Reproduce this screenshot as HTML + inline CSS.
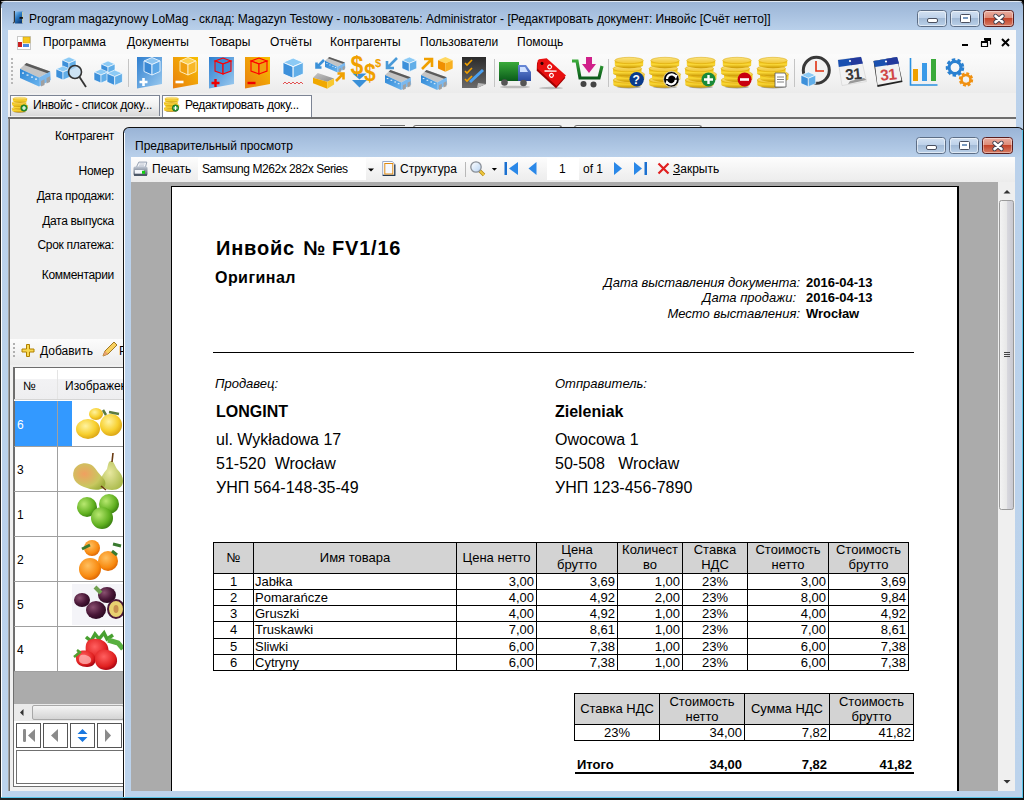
<!DOCTYPE html>
<html><head><meta charset="utf-8">
<style>
*{margin:0;padding:0;box-sizing:border-box}
html,body{width:1024px;height:800px;overflow:hidden;background:#000}
body{position:relative;font-family:"Liberation Sans",sans-serif;font-size:12px;color:#000}
.a{position:absolute}
.t{position:absolute;white-space:nowrap;line-height:1}
.b{font-weight:bold}
.i{font-style:italic}
.hc{position:absolute;top:542px;height:30px;display:flex;align-items:center;justify-content:center;text-align:center;font-size:13px;line-height:15px}
.hc2{position:absolute;top:693px;height:31px;display:flex;align-items:center;justify-content:center;text-align:center;font-size:13px;line-height:15px}
.tc{position:absolute;font-size:13px;line-height:16px;padding:0 2px;white-space:nowrap}
</style></head><body>
<!-- main window -->
<div class="a" style="left:0;top:0;width:1024px;height:800px;background:linear-gradient(#9ab4d6 0,#bad1eb 30px,#bcd3ec 100%);border:1px solid #222;border-radius:6px 6px 0 0;border-bottom-width:2px;"></div>
<div class="a" style="left:1px;top:1px;width:1021px;height:1px;background:rgba(255,255,255,.7);border-radius:5px 5px 0 0"></div>

<div class="a" style="left:1px;top:8px;width:1px;height:789px;background:#fff"></div>
<!-- title -->
<div class="t" style="left:29px;top:13px;font-size:12px;color:#000">Program magazynowy LoMag - склад: Magazyn Testowy - пользователь: Administrator - [Редактировать документ: Инвойс [Счёт нетто]]</div>

<!-- client area -->
<div class="a" style="left:8px;top:30px;width:1008px;height:761px;background:#f0f0f0"></div>
<!-- menu -->
<div class="a" style="left:8px;top:30px;width:1008px;height:24px;background:#f9f9f9"></div>
<div class="t" style="left:43px;top:36px">Программа</div>
<div class="t" style="left:127px;top:36px">Документы</div>
<div class="t" style="left:209px;top:36px">Товары</div>
<div class="t" style="left:270px;top:36px">Отчёты</div>
<div class="t" style="left:330px;top:36px">Контрагенты</div>
<div class="t" style="left:420px;top:36px">Пользователи</div>
<div class="t" style="left:517px;top:36px">Помощь</div>
<!-- toolbar -->
<div class="a" style="left:8px;top:54px;width:1008px;height:39px;background:linear-gradient(#fbfbfb,#f3f3f3 60%,#ebebeb)"></div>

<!-- tabs row -->
<div class="a" style="left:8px;top:93px;width:1008px;height:25px;background:#f0f0f0"></div>
<div class="a" style="left:10px;top:95px;width:150px;height:21px;border:1px solid #7c8494;border-bottom:none;background:linear-gradient(#fdfdfd,#f0f0f0 50%,#d9d9d9)"></div>
<div class="a" style="left:162px;top:95px;width:150px;height:22px;border:1px solid #7c8494;border-bottom:none;background:#fff"></div>
<div class="t" style="left:33px;top:99px;letter-spacing:-.3px">Инвойс - список доку...</div>
<div class="t" style="left:185px;top:99px;letter-spacing:-.3px">Редактировать доку...</div>
<div class="a" style="left:8px;top:117px;width:1008px;height:2px;background:#6d6d6d"></div>

<svg class="a" style="left:0;top:0" width="1024" height="120" viewBox="0 0 1024 120">
<defs>
<linearGradient id="gB" x1="0" y1="0" x2="1" y2="1"><stop offset="0" stop-color="#2f7fcf"/><stop offset="1" stop-color="#9ccbf0"/></linearGradient>
<linearGradient id="gBd" x1="0" y1="0" x2="0" y2="1"><stop offset="0" stop-color="#5aaae8"/><stop offset="1" stop-color="#2a78c8"/></linearGradient>
<linearGradient id="gO" x1="1" y1="0" x2="0" y2="1"><stop offset="0" stop-color="#f8c000"/><stop offset="1" stop-color="#e87e10"/></linearGradient>
<linearGradient id="gOc" x1="0" y1="0" x2="0" y2="1"><stop offset="0" stop-color="#ffc830"/><stop offset="1" stop-color="#f09000"/></linearGradient>
<linearGradient id="gRoof" x1="0" y1="0" x2="1" y2="1"><stop offset="0" stop-color="#c8c8c8"/><stop offset="1" stop-color="#8a8a8a"/></linearGradient>
<linearGradient id="gSide" x1="0" y1="0" x2="0" y2="1"><stop offset="0" stop-color="#e8b400"/><stop offset=".5" stop-color="#fad838"/><stop offset="1" stop-color="#c89400"/></linearGradient><linearGradient id="gTop" x1="0" y1="0" x2="0" y2="1"><stop offset="0" stop-color="#fbe480"/><stop offset="1" stop-color="#f0c430"/></linearGradient><linearGradient id="gCoin" x1="0" y1="0" x2="0" y2="1"><stop offset="0" stop-color="#fff2a0"/><stop offset=".5" stop-color="#f5d040"/><stop offset="1" stop-color="#d9a800"/></linearGradient>
<linearGradient id="gGreen" x1="0" y1="0" x2="0" y2="1"><stop offset="0" stop-color="#3aaa3a"/><stop offset="1" stop-color="#0a5a1a"/></linearGradient>
<linearGradient id="gCab" x1="0" y1="0" x2="0" y2="1"><stop offset="0" stop-color="#6a8ad8"/><stop offset="1" stop-color="#2a4aa0"/></linearGradient>
<linearGradient id="gDark" x1="0" y1="0" x2="0" y2="1"><stop offset="0" stop-color="#2a2a2a"/><stop offset="1" stop-color="#6a6a6a"/></linearGradient>
<linearGradient id="gWall" x1="0" y1="0" x2="1" y2="1"><stop offset="0" stop-color="#2a84d4"/><stop offset="1" stop-color="#6ab4ee"/></linearGradient>
<g id="wh">
 <polygon points="0,23 19,31 31,24 30.5,15 19,23.5 0,15" fill="#fff" opacity="0"/>
 <polygon points="0,5.8 6.4,0 30.2,8.4 19,14.6" fill="#c4c4c4"/>
 <polygon points="6.4,0 30.2,8.4 28,10.6 4.3,2" fill="#5a5a5a"/>
 <polygon points="0,5.8 19,14.6 19,23.5 0,15" fill="url(#gWall)"/>
 <polygon points="19,14.6 30.2,8.4 30.8,17 19,23.5" fill="#7ab8ee"/>
 <polygon points="21,18 24.5,16.3 24.5,22 21,23.6" fill="#a0a0a0"/><polygon points="26.5,15 30,13.2 30,19 26.5,20.6" fill="#a0a0a0"/>
 <g fill="#fff" opacity=".9"><rect x="2" y="9.5" width="2" height="1.2"/><rect x="6.5" y="11.5" width="2" height="1.2"/><rect x="11" y="13.5" width="2" height="1.2"/><rect x="15" y="15.5" width="2" height="1.2"/></g>
</g>
<g id="cube">
 <polygon points="0,3 7,0 14,3 7,6" fill="#8ccaf5" stroke="#fff" stroke-width=".6"/>
 <polygon points="0,3 7,6 7,14 0,11" fill="#3d90da" stroke="#fff" stroke-width=".6"/>
 <polygon points="7,6 14,3 14,11 7,14" fill="#62aee8" stroke="#fff" stroke-width=".6"/>
</g>
<g id="coins"><ellipse cx="16" cy="30" rx="12" ry="1.4" fill="#444" opacity=".45"/><path d="M0.3000000000000007 23.0v4.6a14.2 3.2 0 0 0 28.4 0v-4.6z" fill="url(#gSide)"/><ellipse cx="14.5" cy="23.0" rx="14.2" ry="3.2" fill="url(#gTop)" stroke="#d9a400" stroke-width=".5"/><path d="M3.1000000000000014 17.2v4.6a14.2 3.2 0 0 0 28.4 0v-4.6z" fill="url(#gSide)"/><ellipse cx="17.3" cy="17.2" rx="14.2" ry="3.2" fill="url(#gTop)" stroke="#d9a400" stroke-width=".5"/><path d="M0.10000000000000142 11.600000000000001v4.6a14.2 3.2 0 0 0 28.4 0v-4.6z" fill="url(#gSide)"/><ellipse cx="14.3" cy="11.600000000000001" rx="14.2" ry="3.2" fill="url(#gTop)" stroke="#d9a400" stroke-width=".5"/><path d="M1.8000000000000007 3.5v4.6a14.2 3.2 0 0 0 28.4 0v-4.6z" fill="url(#gSide)"/><ellipse cx="16" cy="3.5" rx="14.2" ry="3.2" fill="url(#gTop)" stroke="#d9a400" stroke-width=".5"/></g>
</defs>
<!-- menu icon -->
<rect x="17.5" y="36.5" width="13" height="13" fill="#fff" stroke="#c8c8c8"/>
<rect x="23" y="37" width="7" height="6" fill="#f7c820" stroke="#c89a00" stroke-width=".5"/>
<rect x="18" y="42" width="4" height="5" fill="#c82020"/>
<rect x="23" y="44" width="6" height="3" fill="#4a8ae0"/>
<!-- grip -->
<g fill="#b8b8b8"><rect x="11" y="58" width="2" height="2"/><rect x="11" y="62" width="2" height="2"/><rect x="11" y="66" width="2" height="2"/><rect x="11" y="70" width="2" height="2"/><rect x="11" y="74" width="2" height="2"/><rect x="11" y="78" width="2" height="2"/><rect x="11" y="82" width="2" height="2"/></g>
<!-- 1 warehouse -->
<g transform="translate(20 63)">
 <polygon points="0,23 19,31 31,24 30.5,15 19,23.5 0,15" fill="#fff" opacity="0"/>
 <polygon points="0,5.8 6.4,0 30.2,8.4 19,14.6" fill="#c4c4c4"/>
 <polygon points="6.4,0 30.2,8.4 28,10.6 4.3,2" fill="#5a5a5a"/>
 <polygon points="0,5.8 19,14.6 19,23.5 0,15" fill="url(#gWall)"/>
 <polygon points="19,14.6 30.2,8.4 30.8,17 19,23.5" fill="#7ab8ee"/>
 <polygon points="21,18 24.5,16.3 24.5,22 21,23.6" fill="#a0a0a0"/><polygon points="26.5,15 30,13.2 30,19 26.5,20.6" fill="#a0a0a0"/>
 <g fill="#fff" opacity=".9"><rect x="2" y="9.5" width="2" height="1.2"/><rect x="6.5" y="11.5" width="2" height="1.2"/><rect x="11" y="13.5" width="2" height="1.2"/><rect x="15" y="15.5" width="2" height="1.2"/></g>
</g>
<!-- 2 search cubes -->
<g transform="translate(62 57)">
 <polygon points="0,3 7,0 14,3 7,6" fill="#8ccaf5" stroke="#fff" stroke-width=".6"/>
 <polygon points="0,3 7,6 7,14 0,11" fill="#3d90da" stroke="#fff" stroke-width=".6"/>
 <polygon points="7,6 14,3 14,11 7,14" fill="#62aee8" stroke="#fff" stroke-width=".6"/>
</g><g transform="translate(0,0) translate(56 66)">
 <polygon points="0,3 7,0 14,3 7,6" fill="#8ccaf5" stroke="#fff" stroke-width=".6"/>
 <polygon points="0,3 7,6 7,14 0,11" fill="#3d90da" stroke="#fff" stroke-width=".6"/>
 <polygon points="7,6 14,3 14,11 7,14" fill="#62aee8" stroke="#fff" stroke-width=".6"/>
</g>
<circle cx="75" cy="72" r="6.5" fill="#bcdcf3" fill-opacity=".7" stroke="#333" stroke-width="1.6"/>
<line x1="79.5" y1="77" x2="86" y2="87" stroke="#333" stroke-width="1.8"/>
<!-- 3 cubes -->
<g transform="translate(101 61)">
 <polygon points="0,3 7,0 14,3 7,6" fill="#8ccaf5" stroke="#fff" stroke-width=".6"/>
 <polygon points="0,3 7,6 7,14 0,11" fill="#3d90da" stroke="#fff" stroke-width=".6"/>
 <polygon points="7,6 14,3 14,11 7,14" fill="#62aee8" stroke="#fff" stroke-width=".6"/>
</g><g transform="translate(94 69)">
 <polygon points="0,3 7,0 14,3 7,6" fill="#8ccaf5" stroke="#fff" stroke-width=".6"/>
 <polygon points="0,3 7,6 7,14 0,11" fill="#3d90da" stroke="#fff" stroke-width=".6"/>
 <polygon points="7,6 14,3 14,11 7,14" fill="#62aee8" stroke="#fff" stroke-width=".6"/>
</g><g transform="translate(107,70) scale(1.1) translate(-107,-70) translate(107 70)">
 <polygon points="0,3 7,0 14,3 7,6" fill="#8ccaf5" stroke="#fff" stroke-width=".6"/>
 <polygon points="0,3 7,6 7,14 0,11" fill="#3d90da" stroke="#fff" stroke-width=".6"/>
 <polygon points="7,6 14,3 14,11 7,14" fill="#62aee8" stroke="#fff" stroke-width=".6"/>
</g>
<!-- separators -->
<rect x="128" y="59" width="1" height="28" fill="#c4c4c4"/><rect x="494" y="59" width="1" height="28" fill="#c4c4c4"/><rect x="608" y="59" width="1" height="28" fill="#c4c4c4"/><rect x="794" y="59" width="1" height="28" fill="#c4c4c4"/>
<!-- 4 blue doc + -->
<polygon points="137,57 162,57 162,84 137,88.5" fill="url(#gB)"/>
<g stroke="#e8f4ff" stroke-width=".9"><polygon points="144,61 152,57.5 160,61 152,64.5" fill="#8cc4f0"/><polygon points="144,61 152,64.5 152,75 144,71.5" fill="#3a88d4"/><polygon points="152,64.5 160,61 160,71.5 152,75" fill="#5aa6e6"/></g>
<path d="M139.5 82h8M143.5 78v8" stroke="#fff" stroke-width="2.6"/>
<!-- 5 orange doc - -->
<polygon points="173,57 198,57 198,84 173,88.5" fill="url(#gO)"/>
<g stroke="#fff0c8" stroke-width=".9"><polygon points="180,61 188,57.5 196,61 188,64.5" fill="#fcd050"/><polygon points="180,61 188,64.5 188,75 180,71.5" fill="#f0a010"/><polygon points="188,64.5 196,61 196,71.5 188,75" fill="#f8b828"/></g>
<path d="M175.5 82h8" stroke="#fff" stroke-width="2.6"/>
<!-- 6 blue doc red cube + -->
<polygon points="209,57 234,57 234,84 209,88.5" fill="url(#gB)"/>
<g stroke="#f00" stroke-width="1.1" fill="#3a88d4" fill-opacity=".85"><polygon points="215,61 223,58 231,61 223,64"/><polygon points="215,61 223,64 223,74 215,71"/><polygon points="223,64 231,61 231,71 223,74"/></g>
<path d="M211.5 83h8M215.5 79v8" stroke="#e00" stroke-width="2.4"/>
<!-- 7 orange doc red cube - -->
<polygon points="245,57 270,57 270,84 245,88.5" fill="url(#gO)"/>
<g stroke="#f00" stroke-width="1.1" fill="#f0a010"><polygon points="251,61 259,58 267,61 259,64"/><polygon points="251,61 259,64 259,74 251,71"/><polygon points="259,64 267,61 267,71 259,74"/></g>
<path d="M247.5 83h8" stroke="#e00" stroke-width="2.4"/>
<!-- 8 cube zigzag -->
<g transform="translate(283,58) scale(1.45)"><g transform="translate(0 0)">
 <polygon points="0,3 7,0 14,3 7,6" fill="#8ccaf5" stroke="#fff" stroke-width=".6"/>
 <polygon points="0,3 7,6 7,14 0,11" fill="#3d90da" stroke="#fff" stroke-width=".6"/>
 <polygon points="7,6 14,3 14,11 7,14" fill="#62aee8" stroke="#fff" stroke-width=".6"/>
</g></g>
<polyline points="283,84 285,82 287,84 289,82 291,84 293,82 295,84 297,82 299,84 301,82 303,84" fill="none" stroke="#e04040" stroke-width=".9"/>
<!-- 9 warehouses swap -->
<g transform="translate(325,57) scale(.66)"><g transform="translate(0 0)">
 <polygon points="0,23 19,31 31,24 30.5,15 19,23.5 0,15" fill="#fff" opacity="0"/>
 <polygon points="0,5.8 6.4,0 30.2,8.4 19,14.6" fill="#c4c4c4"/>
 <polygon points="6.4,0 30.2,8.4 28,10.6 4.3,2" fill="#5a5a5a"/>
 <polygon points="0,5.8 19,14.6 19,23.5 0,15" fill="url(#gWall)"/>
 <polygon points="19,14.6 30.2,8.4 30.8,17 19,23.5" fill="#7ab8ee"/>
 <polygon points="21,18 24.5,16.3 24.5,22 21,23.6" fill="#a0a0a0"/><polygon points="26.5,15 30,13.2 30,19 26.5,20.6" fill="#a0a0a0"/>
 <g fill="#fff" opacity=".9"><rect x="2" y="9.5" width="2" height="1.2"/><rect x="6.5" y="11.5" width="2" height="1.2"/><rect x="11" y="13.5" width="2" height="1.2"/><rect x="15" y="15.5" width="2" height="1.2"/></g>
</g></g>
<g transform="translate(313,73) scale(.68)">
 <polygon points="0,7 7,0 31,8 21,13" fill="url(#gRoof)"/><polygon points="0,7 21,13 21,23 0,15" fill="#f0a800"/><polygon points="21,13 31,8 31,17 21,23" fill="#f8c830"/>
</g>
<path d="M324 60l-7 7M316.5 62.5v5h5" stroke="#3a90d8" stroke-width="2.6" fill="none"/>
<path d="M336 81l7-7M337.5 73.5h6v6" stroke="#f0a000" stroke-width="2.6" fill="none"/>
<!-- 10 $$ -->
<path d="M352.5 73.5h14l-7 6z" fill="#3a90d8"/>
<path d="M352 80h15l-7.5 7.5z" fill="#3a90d8"/>
<text x="350.5" y="74" font-family="Liberation Sans" font-weight="bold" font-size="23" fill="#f0a000" transform="translate(350.5 74) scale(1 1.1) translate(-350.5 -74)">$</text>
<text x="364" y="81.5" font-family="Liberation Sans" font-weight="bold" font-size="21" fill="#f0a000" transform="translate(364 81.5) scale(1 1.1) translate(-364 -81.5)">$</text>
<text x="375" y="67" font-family="Liberation Sans" font-weight="bold" font-size="11" fill="#f0a000">$</text>
<!-- 11 blue arrow cube warehouse -->
<path d="M397 58l-9 9M387 61v7h7" stroke="#4a9ad8" stroke-width="2.6" fill="none"/>
<g transform="translate(402,57) scale(1.05)"><g transform="translate(0 0)">
 <polygon points="0,3 7,0 14,3 7,6" fill="#8ccaf5" stroke="#fff" stroke-width=".6"/>
 <polygon points="0,3 7,6 7,14 0,11" fill="#3d90da" stroke="#fff" stroke-width=".6"/>
 <polygon points="7,6 14,3 14,11 7,14" fill="#62aee8" stroke="#fff" stroke-width=".6"/>
</g></g>
<g transform="translate(385,70) scale(.85)"><g transform="translate(0 0)">
 <polygon points="0,23 19,31 31,24 30.5,15 19,23.5 0,15" fill="#fff" opacity="0"/>
 <polygon points="0,5.8 6.4,0 30.2,8.4 19,14.6" fill="#c4c4c4"/>
 <polygon points="6.4,0 30.2,8.4 28,10.6 4.3,2" fill="#5a5a5a"/>
 <polygon points="0,5.8 19,14.6 19,23.5 0,15" fill="url(#gWall)"/>
 <polygon points="19,14.6 30.2,8.4 30.8,17 19,23.5" fill="#7ab8ee"/>
 <polygon points="21,18 24.5,16.3 24.5,22 21,23.6" fill="#a0a0a0"/><polygon points="26.5,15 30,13.2 30,19 26.5,20.6" fill="#a0a0a0"/>
 <g fill="#fff" opacity=".9"><rect x="2" y="9.5" width="2" height="1.2"/><rect x="6.5" y="11.5" width="2" height="1.2"/><rect x="11" y="13.5" width="2" height="1.2"/><rect x="15" y="15.5" width="2" height="1.2"/></g>
</g></g>
<!-- 12 orange arrow cube warehouse -->
<path d="M422 69l9-9M424 59h8v8" stroke="#f0a000" stroke-width="2.6" fill="none"/>
<g transform="translate(438,57) scale(1.05)">
 <polygon points="0,3 7,0 14,3 7,6" fill="#ffd860"/><polygon points="0,3 7,6 7,14 0,11" fill="#f09000"/><polygon points="7,6 14,3 14,11 7,14" fill="#f8b020"/>
</g>
<g transform="translate(421,70) scale(.85)"><g transform="translate(0 0)">
 <polygon points="0,23 19,31 31,24 30.5,15 19,23.5 0,15" fill="#fff" opacity="0"/>
 <polygon points="0,5.8 6.4,0 30.2,8.4 19,14.6" fill="#c4c4c4"/>
 <polygon points="6.4,0 30.2,8.4 28,10.6 4.3,2" fill="#5a5a5a"/>
 <polygon points="0,5.8 19,14.6 19,23.5 0,15" fill="url(#gWall)"/>
 <polygon points="19,14.6 30.2,8.4 30.8,17 19,23.5" fill="#7ab8ee"/>
 <polygon points="21,18 24.5,16.3 24.5,22 21,23.6" fill="#a0a0a0"/><polygon points="26.5,15 30,13.2 30,19 26.5,20.6" fill="#a0a0a0"/>
 <g fill="#fff" opacity=".9"><rect x="2" y="9.5" width="2" height="1.2"/><rect x="6.5" y="11.5" width="2" height="1.2"/><rect x="11" y="13.5" width="2" height="1.2"/><rect x="15" y="15.5" width="2" height="1.2"/></g>
</g></g>
<!-- 13 checklist -->
<polygon points="462,57 486,57 486,84 477,88 462,88" fill="url(#gDark)"/>
<polygon points="477,88 486,84 478,83" fill="#bbb"/>
<path d="M465 63l2 2 5-5M465 71l2 2 5-5M465 79l2 2 5-5" stroke="#f0a000" stroke-width="1.6" fill="none"/>
<path d="M470 82l13-12" stroke="#4aa0f0" stroke-width="3"/>
<!-- 14 truck -->
<ellipse cx="515" cy="87" rx="15" ry="1.3" fill="#999" opacity=".6"/>
<rect x="499" y="62" width="20" height="19" fill="url(#gGreen)"/>
<path d="M518 65h8l5 7v9h-13z" fill="url(#gCab)"/>
<path d="M520 67h5l3 5h-8z" fill="#cfe0ff"/>
<circle cx="504.5" cy="82.5" r="3.3" fill="#555"/><circle cx="523.5" cy="83" r="3.3" fill="#555"/>
<!-- 15 tag -->
<ellipse cx="551" cy="88" rx="12" ry="1.2" fill="#888" opacity=".5"/>
<g transform="translate(549.5,71.5) rotate(42)">
<polygon points="-16,-2 -11,-8 15,-8 15,6 -11,6 -16,0" fill="#a00000" transform="translate(1,2)"/>
<polygon points="-16,-2 -11,-8 15,-8 15,6 -11,6 -16,0" fill="#e81010"/>
<circle cx="-11" cy="-1" r="1.6" fill="#300"/>
<path d="M-4 3L5-5" stroke="#fff" stroke-width="1.4"/><circle cx="-3" cy="-3.5" r="1.9" fill="none" stroke="#fff" stroke-width="1.2"/><circle cx="4" cy="1.5" r="1.9" fill="none" stroke="#fff" stroke-width="1.2"/>
</g>
<!-- 16 cart -->
<path d="M572 61h5l3 17h19l3-12" stroke="url(#gGreen)" stroke-width="3.2" fill="none"/>
<path d="M586 57h6v7h4l-7 9-7-9h4z" fill="#d0208a"/>
<circle cx="583.5" cy="84" r="3" fill="#444"/><circle cx="593.5" cy="84.5" r="3" fill="#444"/>
<!-- 17-21 coins -->
<g transform="translate(613 57)"><ellipse cx="16" cy="30" rx="12" ry="1.4" fill="#444" opacity=".45"/><path d="M0.3000000000000007 23.0v4.6a14.2 3.2 0 0 0 28.4 0v-4.6z" fill="url(#gSide)"/><ellipse cx="14.5" cy="23.0" rx="14.2" ry="3.2" fill="url(#gTop)" stroke="#d9a400" stroke-width=".5"/><path d="M3.1000000000000014 17.2v4.6a14.2 3.2 0 0 0 28.4 0v-4.6z" fill="url(#gSide)"/><ellipse cx="17.3" cy="17.2" rx="14.2" ry="3.2" fill="url(#gTop)" stroke="#d9a400" stroke-width=".5"/><path d="M0.10000000000000142 11.600000000000001v4.6a14.2 3.2 0 0 0 28.4 0v-4.6z" fill="url(#gSide)"/><ellipse cx="14.3" cy="11.600000000000001" rx="14.2" ry="3.2" fill="url(#gTop)" stroke="#d9a400" stroke-width=".5"/><path d="M1.8000000000000007 3.5v4.6a14.2 3.2 0 0 0 28.4 0v-4.6z" fill="url(#gSide)"/><ellipse cx="16" cy="3.5" rx="14.2" ry="3.2" fill="url(#gTop)" stroke="#d9a400" stroke-width=".5"/></g>
<circle cx="636.7" cy="79.3" r="7.2" fill="#0a3a8a"/><text x="632.6" y="83.8" font-family="Liberation Sans" font-weight="bold" font-size="12" fill="#fff">?</text>
<g transform="translate(649 57)"><ellipse cx="16" cy="30" rx="12" ry="1.4" fill="#444" opacity=".45"/><path d="M0.3000000000000007 23.0v4.6a14.2 3.2 0 0 0 28.4 0v-4.6z" fill="url(#gSide)"/><ellipse cx="14.5" cy="23.0" rx="14.2" ry="3.2" fill="url(#gTop)" stroke="#d9a400" stroke-width=".5"/><path d="M3.1000000000000014 17.2v4.6a14.2 3.2 0 0 0 28.4 0v-4.6z" fill="url(#gSide)"/><ellipse cx="17.3" cy="17.2" rx="14.2" ry="3.2" fill="url(#gTop)" stroke="#d9a400" stroke-width=".5"/><path d="M0.10000000000000142 11.600000000000001v4.6a14.2 3.2 0 0 0 28.4 0v-4.6z" fill="url(#gSide)"/><ellipse cx="14.3" cy="11.600000000000001" rx="14.2" ry="3.2" fill="url(#gTop)" stroke="#d9a400" stroke-width=".5"/><path d="M1.8000000000000007 3.5v4.6a14.2 3.2 0 0 0 28.4 0v-4.6z" fill="url(#gSide)"/><ellipse cx="16" cy="3.5" rx="14.2" ry="3.2" fill="url(#gTop)" stroke="#d9a400" stroke-width=".5"/></g>
<circle cx="671.4" cy="79.3" r="7.8" fill="#000" stroke="#fff" stroke-width=".6"/><path d="M667 79a4.6 4.6 0 0 1 8-3" stroke="#fff" stroke-width="2.2" fill="none"/><path d="M673 74.5l4.5 0.5-1.5 4z" fill="#fff"/><path d="M675.8 79.8a4.6 4.6 0 0 1-8 3" stroke="#fff" stroke-width="2.2" fill="none"/><path d="M669.8 84.2l-4.5-.5 1.5-4z" fill="#fff"/>
<g transform="translate(685 57)"><ellipse cx="16" cy="30" rx="12" ry="1.4" fill="#444" opacity=".45"/><path d="M0.3000000000000007 23.0v4.6a14.2 3.2 0 0 0 28.4 0v-4.6z" fill="url(#gSide)"/><ellipse cx="14.5" cy="23.0" rx="14.2" ry="3.2" fill="url(#gTop)" stroke="#d9a400" stroke-width=".5"/><path d="M3.1000000000000014 17.2v4.6a14.2 3.2 0 0 0 28.4 0v-4.6z" fill="url(#gSide)"/><ellipse cx="17.3" cy="17.2" rx="14.2" ry="3.2" fill="url(#gTop)" stroke="#d9a400" stroke-width=".5"/><path d="M0.10000000000000142 11.600000000000001v4.6a14.2 3.2 0 0 0 28.4 0v-4.6z" fill="url(#gSide)"/><ellipse cx="14.3" cy="11.600000000000001" rx="14.2" ry="3.2" fill="url(#gTop)" stroke="#d9a400" stroke-width=".5"/><path d="M1.8000000000000007 3.5v4.6a14.2 3.2 0 0 0 28.4 0v-4.6z" fill="url(#gSide)"/><ellipse cx="16" cy="3.5" rx="14.2" ry="3.2" fill="url(#gTop)" stroke="#d9a400" stroke-width=".5"/></g>
<circle cx="708.5" cy="79.5" r="7" fill="#1a8a3a"/><path d="M704 79.5h9M708.5 75v9" stroke="#fff" stroke-width="2.4"/>
<g transform="translate(721 57)"><ellipse cx="16" cy="30" rx="12" ry="1.4" fill="#444" opacity=".45"/><path d="M0.3000000000000007 23.0v4.6a14.2 3.2 0 0 0 28.4 0v-4.6z" fill="url(#gSide)"/><ellipse cx="14.5" cy="23.0" rx="14.2" ry="3.2" fill="url(#gTop)" stroke="#d9a400" stroke-width=".5"/><path d="M3.1000000000000014 17.2v4.6a14.2 3.2 0 0 0 28.4 0v-4.6z" fill="url(#gSide)"/><ellipse cx="17.3" cy="17.2" rx="14.2" ry="3.2" fill="url(#gTop)" stroke="#d9a400" stroke-width=".5"/><path d="M0.10000000000000142 11.600000000000001v4.6a14.2 3.2 0 0 0 28.4 0v-4.6z" fill="url(#gSide)"/><ellipse cx="14.3" cy="11.600000000000001" rx="14.2" ry="3.2" fill="url(#gTop)" stroke="#d9a400" stroke-width=".5"/><path d="M1.8000000000000007 3.5v4.6a14.2 3.2 0 0 0 28.4 0v-4.6z" fill="url(#gSide)"/><ellipse cx="16" cy="3.5" rx="14.2" ry="3.2" fill="url(#gTop)" stroke="#d9a400" stroke-width=".5"/></g>
<circle cx="744.6" cy="79.5" r="7" fill="#c80010"/><path d="M740 79.5h9" stroke="#fff" stroke-width="2.6"/>
<g transform="translate(757 57)"><ellipse cx="16" cy="30" rx="12" ry="1.4" fill="#444" opacity=".45"/><path d="M0.3000000000000007 23.0v4.6a14.2 3.2 0 0 0 28.4 0v-4.6z" fill="url(#gSide)"/><ellipse cx="14.5" cy="23.0" rx="14.2" ry="3.2" fill="url(#gTop)" stroke="#d9a400" stroke-width=".5"/><path d="M3.1000000000000014 17.2v4.6a14.2 3.2 0 0 0 28.4 0v-4.6z" fill="url(#gSide)"/><ellipse cx="17.3" cy="17.2" rx="14.2" ry="3.2" fill="url(#gTop)" stroke="#d9a400" stroke-width=".5"/><path d="M0.10000000000000142 11.600000000000001v4.6a14.2 3.2 0 0 0 28.4 0v-4.6z" fill="url(#gSide)"/><ellipse cx="14.3" cy="11.600000000000001" rx="14.2" ry="3.2" fill="url(#gTop)" stroke="#d9a400" stroke-width=".5"/><path d="M1.8000000000000007 3.5v4.6a14.2 3.2 0 0 0 28.4 0v-4.6z" fill="url(#gSide)"/><ellipse cx="16" cy="3.5" rx="14.2" ry="3.2" fill="url(#gTop)" stroke="#d9a400" stroke-width=".5"/></g>
<path d="M775 73h10l1 2v12h-11z" fill="#fff" stroke="#555" stroke-width=".8"/><path d="M777 77h7M777 79.5h7M777 82h7" stroke="#666" stroke-width=".8"/>
<!-- 22 clock -->
<circle cx="816.3" cy="70.3" r="13" fill="#f2f2f2" stroke="#383838" stroke-width="3"/>
<path d="M816 61v10h8" stroke="#e03010" stroke-width="1.6" fill="none"/>
<g transform="translate(801,72) scale(1.05)"><g transform="translate(0 0)">
 <polygon points="0,3 7,0 14,3 7,6" fill="#8ccaf5" stroke="#fff" stroke-width=".6"/>
 <polygon points="0,3 7,6 7,14 0,11" fill="#3d90da" stroke="#fff" stroke-width=".6"/>
 <polygon points="7,6 14,3 14,11 7,14" fill="#62aee8" stroke="#fff" stroke-width=".6"/>
</g></g>
<!-- 23 calendar -->
<polygon points="838,60 861,57 866.5,81.5 842,85.5" fill="#f2f2f2" stroke="#d0d0d0" stroke-width=".6"/>
<polygon points="848,84 866.5,80 864,78 850,81" fill="#999"/>
<polygon points="838,60 861,57 862.8,63.5 838.8,67" fill="#1a50b0"/>
<polygon points="850,58.5 861,57 862.8,63.5 851,65.2" fill="#2a2a90" opacity=".6"/>
<circle cx="850" cy="61" r="1.1" fill="#fff"/>
<text x="845" y="79.5" font-family="Liberation Sans" font-weight="bold" font-size="15.5" fill="#383838" transform="rotate(-6 853 73)" letter-spacing="-.5">31</text>
<!-- 24 calendar red -->
<polygon points="873.5,61 897,57 902.5,82 877.5,87" fill="#222"/>
<polygon points="874.5,61 897,57 901.5,80.5 877.5,85" fill="#f2f2f2"/>
<polygon points="873.5,61 897,57 899,63.5 875,67" fill="#1a50b0"/>
<polygon points="886,59 897,57 899,63.5 887,65.5" fill="#2a2a90" opacity=".6"/>
<circle cx="886" cy="61.5" r="1.1" fill="#fff"/>
<text x="880" y="80" font-family="Liberation Sans" font-weight="bold" font-size="15.5" fill="#d04848" transform="rotate(-6 888 73)" letter-spacing="-.5">31</text>
<!-- 25 chart -->
<path d="M910.5 58v27h27" stroke="#2a90e0" stroke-width="1.6" fill="none"/>
<rect x="913" y="69" width="5" height="12" fill="#f0a000"/><rect x="922" y="63" width="5" height="18" fill="#3a9ae8"/><rect x="931" y="59" width="5" height="22" fill="#3aaa3a"/>
<!-- 26 gears -->
<circle cx="955" cy="67.5" r="7" fill="none" stroke="#2a80d0" stroke-width="4.5" stroke-dasharray="3 2"/>
<circle cx="955" cy="67.5" r="6" fill="none" stroke="#2a80d0" stroke-width="3"/>
<circle cx="966" cy="79.5" r="5.3" fill="none" stroke="#f09010" stroke-width="3.8" stroke-dasharray="2.5 1.6"/>
<circle cx="966" cy="79.5" r="4.5" fill="none" stroke="#f09010" stroke-width="2.5"/>
<!-- tabs icons -->
<g transform="translate(12,97) scale(.5)"><g transform="translate(0 0)"><ellipse cx="16" cy="30" rx="12" ry="1.4" fill="#444" opacity=".45"/><path d="M0.3000000000000007 23.0v4.6a14.2 3.2 0 0 0 28.4 0v-4.6z" fill="url(#gSide)"/><ellipse cx="14.5" cy="23.0" rx="14.2" ry="3.2" fill="url(#gTop)" stroke="#d9a400" stroke-width=".5"/><path d="M3.1000000000000014 17.2v4.6a14.2 3.2 0 0 0 28.4 0v-4.6z" fill="url(#gSide)"/><ellipse cx="17.3" cy="17.2" rx="14.2" ry="3.2" fill="url(#gTop)" stroke="#d9a400" stroke-width=".5"/><path d="M0.10000000000000142 11.600000000000001v4.6a14.2 3.2 0 0 0 28.4 0v-4.6z" fill="url(#gSide)"/><ellipse cx="14.3" cy="11.600000000000001" rx="14.2" ry="3.2" fill="url(#gTop)" stroke="#d9a400" stroke-width=".5"/><path d="M1.8000000000000007 3.5v4.6a14.2 3.2 0 0 0 28.4 0v-4.6z" fill="url(#gSide)"/><ellipse cx="16" cy="3.5" rx="14.2" ry="3.2" fill="url(#gTop)" stroke="#d9a400" stroke-width=".5"/></g></g><circle cx="24" cy="108" r="3.2" fill="#2a9a3a" stroke="#0a5a1a" stroke-width=".6"/><path d="M22 108h4M24 106v4" stroke="#fff" stroke-width="1.2"/>
<g transform="translate(164,97) scale(.48)"><g transform="translate(0 0)"><ellipse cx="16" cy="30" rx="12" ry="1.4" fill="#444" opacity=".45"/><path d="M0.3000000000000007 23.0v4.6a14.2 3.2 0 0 0 28.4 0v-4.6z" fill="url(#gSide)"/><ellipse cx="14.5" cy="23.0" rx="14.2" ry="3.2" fill="url(#gTop)" stroke="#d9a400" stroke-width=".5"/><path d="M3.1000000000000014 17.2v4.6a14.2 3.2 0 0 0 28.4 0v-4.6z" fill="url(#gSide)"/><ellipse cx="17.3" cy="17.2" rx="14.2" ry="3.2" fill="url(#gTop)" stroke="#d9a400" stroke-width=".5"/><path d="M0.10000000000000142 11.600000000000001v4.6a14.2 3.2 0 0 0 28.4 0v-4.6z" fill="url(#gSide)"/><ellipse cx="14.3" cy="11.600000000000001" rx="14.2" ry="3.2" fill="url(#gTop)" stroke="#d9a400" stroke-width=".5"/><path d="M1.8000000000000007 3.5v4.6a14.2 3.2 0 0 0 28.4 0v-4.6z" fill="url(#gSide)"/><ellipse cx="16" cy="3.5" rx="14.2" ry="3.2" fill="url(#gTop)" stroke="#d9a400" stroke-width=".5"/></g></g><circle cx="175.5" cy="108" r="3.2" fill="#2a9a3a" stroke="#0a5a1a" stroke-width=".6"/><path d="M173.5 108h4M175.5 106v4" stroke="#fff" stroke-width="1.2"/>
<!-- mdi buttons -->
<rect x="962" y="44" width="6" height="2" fill="#000"/>
<path d="M984.5 40.5h6v4M981.5 42.5h6v4h-6z" stroke="#000" stroke-width="1.2" fill="none"/><rect x="984" y="38" width="7" height="2" fill="#000"/><rect x="981" y="41" width="7" height="2" fill="#000"/>
<path d="M1002 39l7 7M1009 39l-7 7" stroke="#000" stroke-width="2"/>
<!-- caption buttons -->
</svg>

<svg class="a" style="left:0;top:0" width="1024" height="200" viewBox="0 0 1024 200">
<defs>
<linearGradient id="cbB" x1="0" y1="0" x2="0" y2="1"><stop offset="0" stop-color="#d4e2f2"/><stop offset=".45" stop-color="#bed2ea"/><stop offset=".5" stop-color="#a2bad6"/><stop offset="1" stop-color="#bcd2ea"/></linearGradient>
<linearGradient id="cbR" x1="0" y1="0" x2="0" y2="1"><stop offset="0" stop-color="#eab0a4"/><stop offset=".45" stop-color="#de8c78"/><stop offset=".5" stop-color="#c4442a"/><stop offset="1" stop-color="#d88068"/></linearGradient>
<g id="capbtns">
<rect x=".5" y=".5" width="29" height="16" rx="3" fill="url(#cbB)" stroke="#5d6e86"/>
<rect x="1.5" y="1.5" width="27" height="14" rx="2" fill="none" stroke="#fff" stroke-opacity=".55"/>
<rect x="10.5" y="8.5" width="10" height="4" rx="1.5" fill="#fff" stroke="#4a5060"/>
<rect x="33.5" y=".5" width="29" height="16" rx="3" fill="url(#cbB)" stroke="#5d6e86"/>
<rect x="34.5" y="1.5" width="27" height="14" rx="2" fill="none" stroke="#fff" stroke-opacity=".55"/>
<rect x="43.5" y="4.5" width="10" height="8" rx="1" fill="#fff" stroke="#4a5060"/>
<rect x="46" y="7" width="5" height="2" fill="#7a9ac0"/>
<rect x="66.5" y=".5" width="30" height="16" rx="3" fill="url(#cbR)" stroke="#5a1e1e"/>
<rect x="67.5" y="1.5" width="28" height="14" rx="2" fill="none" stroke="#fff" stroke-opacity=".4"/>
<path d="M78.5 6l7 6M85.5 6l-7 6" stroke="#404050" stroke-width="4.4" stroke-linecap="round"/>
<path d="M78.5 6l7 6M85.5 6l-7 6" stroke="#fff" stroke-width="2.6" stroke-linecap="round"/>
</g>
</defs>
<g transform="translate(917 10)">
<rect x=".5" y=".5" width="29" height="16" rx="3" fill="url(#cbB)" stroke="#5d6e86"/>
<rect x="1.5" y="1.5" width="27" height="14" rx="2" fill="none" stroke="#fff" stroke-opacity=".55"/>
<rect x="10.5" y="8.5" width="10" height="4" rx="1.5" fill="#fff" stroke="#4a5060"/>
<rect x="33.5" y=".5" width="29" height="16" rx="3" fill="url(#cbB)" stroke="#5d6e86"/>
<rect x="34.5" y="1.5" width="27" height="14" rx="2" fill="none" stroke="#fff" stroke-opacity=".55"/>
<rect x="43.5" y="4.5" width="10" height="8" rx="1" fill="#fff" stroke="#4a5060"/>
<rect x="46" y="7" width="5" height="2" fill="#7a9ac0"/>
<rect x="66.5" y=".5" width="30" height="16" rx="3" fill="url(#cbR)" stroke="#5a1e1e"/>
<rect x="67.5" y="1.5" width="28" height="14" rx="2" fill="none" stroke="#fff" stroke-opacity=".4"/>
<path d="M78.5 6l7 6M85.5 6l-7 6" stroke="#404050" stroke-width="4.4" stroke-linecap="round"/>
<path d="M78.5 6l7 6M85.5 6l-7 6" stroke="#fff" stroke-width="2.6" stroke-linecap="round"/>
</g>
<!-- title icon -->
<linearGradient id="tiG" x1="0" y1="0" x2=".6" y2="1"><stop offset="0" stop-color="#8ac4f4"/><stop offset=".5" stop-color="#2a78c0"/><stop offset="1" stop-color="#0a3a78"/></linearGradient>
<rect x="15" y="11.5" width="7.5" height="12" fill="url(#tiG)"/>
<rect x="22.3" y="12" width="0.8" height="11" fill="#e8e0a0"/>
<path d="M14.4 11v10.5q0 1.5-1.5 1.5" stroke="#333" stroke-width="1.2" fill="none"/>
<rect x="19.5" y="17" width="3.5" height="1.8" rx=".6" fill="#111"/>
</svg>

<!-- form labels -->
<div class="t" style="right:910px;letter-spacing:-.3px;top:130px">Контрагент</div>
<div class="t" style="right:910px;letter-spacing:-.3px;top:165px">Номер</div>
<div class="t" style="right:910px;letter-spacing:-.3px;top:190px">Дата продажи:</div>
<div class="t" style="right:910px;letter-spacing:-.3px;top:215px">Дата выпуска</div>
<div class="t" style="right:910px;letter-spacing:-.3px;top:239px">Срок платежа:</div>
<div class="t" style="right:910px;letter-spacing:-.3px;top:269px">Комментарии</div>

<!-- content panel borders -->
<div class="a" style="left:8px;top:119px;width:2px;height:672px;background:#a0a0a0"></div>
<div class="a" style="left:9px;top:119px;width:1px;height:672px;background:#6d6d6d"></div>
<!-- rounded boxes above preview -->
<div class="a" style="left:380px;top:125px;width:25px;height:6px;border-top:1px solid #707070;"></div>
<div class="a" style="left:413px;top:125px;width:149px;height:6px;border:1px solid #707070;border-bottom:none;border-radius:3px 3px 0 0;background:#fff"></div>
<div class="a" style="left:574px;top:125px;width:128px;height:6px;border:1px solid #707070;border-bottom:none;border-radius:3px 3px 0 0;background:#fff"></div>
<!-- sub toolbar -->
<div class="a" style="left:10px;top:339px;width:114px;height:26px;background:linear-gradient(#fcfcfc,#f4f4f4 50%,#ebebeb)"></div>
<div class="a" style="left:13px;top:343px;width:2px;height:15px;background:repeating-linear-gradient(#b0b0b0 0 2px,transparent 2px 4px)"></div>
<svg class="a" style="left:20px;top:342px" width="100" height="18" viewBox="20 342 100 18">
<path d="M26.5 344.5h3v4.5h4.5v3h-4.5v4.5h-3v-4.5h-4.5v-3h4.5z" fill="#f8d850" stroke="#b08000" stroke-width="1"/>
<path d="M103 356l2-5 9-9 3 3-9 9z" fill="#f8d060" stroke="#a07820" stroke-width="1"/>
<path d="M103 356l2-5 3 3z" fill="#e8a070"/>
</svg>
<div class="t" style="left:40px;top:345px">Добавить</div>
<div class="t" style="left:119px;top:345px">Р</div>
<!-- grid -->
<div class="a" style="left:13px;top:367px;width:111px;height:305px;background:#fff;border-left:2px solid #6d6d6d;border-top:1px solid #6d6d6d"></div>
<div class="a" style="left:15px;top:368px;width:109px;height:31px;background:linear-gradient(#fff 0,#fff 35%,#f2f2f4 36%,#eeeef0 100%)"></div>
<div class="a" style="left:14px;top:399px;width:110px;height:1px;background:#d5d5d5"></div><div class="a" style="left:14px;top:400px;width:110px;height:1px;background:#fff"></div>
<div class="a" style="left:57px;top:370px;width:1px;height:29px;background:#e4e4e4"></div>
<div class="t" style="left:23px;top:380px">№</div>
<div class="t" style="left:65px;top:380px">Изображен</div>
<!-- rows -->
<div class="a" style="left:15px;top:401px;width:42px;height:45px;background:#3399ff"></div>
<div class="a" style="left:58px;top:401px;width:14px;height:45px;background:#3399ff"></div>
<div class="a" style="left:14px;top:446px;width:110px;height:1px;background:#a0a0a0"></div>
<div class="a" style="left:14px;top:491px;width:110px;height:1px;background:#a0a0a0"></div>
<div class="a" style="left:14px;top:536px;width:110px;height:1px;background:#a0a0a0"></div>
<div class="a" style="left:14px;top:581px;width:110px;height:1px;background:#a0a0a0"></div>
<div class="a" style="left:14px;top:626px;width:110px;height:1px;background:#a0a0a0"></div>
<div class="a" style="left:14px;top:671px;width:110px;height:1px;background:#a0a0a0"></div>
<div class="a" style="left:57px;top:401px;width:1px;height:270px;background:#a0a0a0"></div>
<div class="t" style="left:17px;top:419px;color:#fff">6</div>
<div class="t" style="left:17px;top:464px">3</div>
<div class="t" style="left:17px;top:509px">1</div>
<div class="t" style="left:17px;top:554px">2</div>
<div class="t" style="left:17px;top:599px">5</div>
<div class="t" style="left:17px;top:644px">4</div>
<svg class="a" style="left:58px;top:400px" width="66" height="271" viewBox="58 400 66 271">
<defs>
<radialGradient id="fL" cx=".4" cy=".35" r=".7"><stop offset="0" stop-color="#fff3a0"/><stop offset=".6" stop-color="#f7d030"/><stop offset="1" stop-color="#d8a010"/></radialGradient>
<radialGradient id="fP" cx=".35" cy=".4" r=".7"><stop offset="0" stop-color="#f0a060"/><stop offset=".7" stop-color="#c8c860"/><stop offset="1" stop-color="#a0b040"/></radialGradient>
<radialGradient id="fP2" cx=".4" cy=".4" r=".7"><stop offset="0" stop-color="#e8e8a0"/><stop offset="1" stop-color="#a8b848"/></radialGradient>
<radialGradient id="fA" cx=".35" cy=".35" r=".7"><stop offset="0" stop-color="#b8e870"/><stop offset=".7" stop-color="#60b020"/><stop offset="1" stop-color="#3a8010"/></radialGradient>
<radialGradient id="fOr" cx=".4" cy=".35" r=".7"><stop offset="0" stop-color="#ffc060"/><stop offset=".7" stop-color="#f88a10"/><stop offset="1" stop-color="#d86000"/></radialGradient>
<radialGradient id="fPl" cx=".35" cy=".35" r=".7"><stop offset="0" stop-color="#8a5070"/><stop offset=".6" stop-color="#4a1838"/><stop offset="1" stop-color="#2a0820"/></radialGradient>
<radialGradient id="fS" cx=".4" cy=".35" r=".7"><stop offset="0" stop-color="#ff6060"/><stop offset=".7" stop-color="#e02020"/><stop offset="1" stop-color="#a00010"/></radialGradient>
</defs>
<!-- lemons -->
<ellipse cx="96" cy="414" rx="7" ry="6" fill="url(#fL)"/>
<ellipse cx="88" cy="429" rx="12" ry="10" fill="url(#fL)"/>
<ellipse cx="111" cy="425" rx="11" ry="11" fill="url(#fL)"/>
<path d="M103 410l3 5M109 412l10 2" stroke="#5a7a40" stroke-width="2.5"/>
<!-- pears -->
<path d="M111 461c3 0 4 5 6 8 4 4 6 8 6 12 0 6-5 9-11 9s-11-3-11-9c0-5 3-8 6-12 1-3 1-8 4-8z" fill="url(#fP2)"/>
<path d="M112 462l1-9" stroke="#6a3a10" stroke-width="1.6"/>
<path d="M74 470c3-7 13-9 19-4 3 3 6 8 10 12 4 4 3 10-2 11-6 2-11 0-17-2-8-3-13-9-10-17z" fill="url(#fP)"/>
<path d="M101 486l5 4" stroke="#6a3a10" stroke-width="1.6"/>
<!-- apples -->
<circle cx="87" cy="507" r="10" fill="url(#fA)"/>
<circle cx="109" cy="504" r="10" fill="url(#fA)"/>
<circle cx="102" cy="518" r="11" fill="url(#fA)"/>
<!-- oranges -->
<circle cx="92" cy="548" r="8" fill="url(#fOr)"/>
<circle cx="108" cy="561" r="10" fill="url(#fOr)"/>
<circle cx="90" cy="569" r="11" fill="url(#fOr)"/>
<path d="M82 549l8-4M113 544l8 2M112 551l5 4" stroke="#3a7a30" stroke-width="3"/>
<!-- plums -->
<rect x="72" y="584" width="52" height="41" fill="#f4f4f8"/>
<ellipse cx="82" cy="600" rx="8" ry="7" fill="url(#fPl)"/>
<ellipse cx="107" cy="595" rx="9" ry="8" fill="url(#fPl)"/>
<ellipse cx="96" cy="610" rx="10" ry="9" fill="url(#fPl)"/>
<ellipse cx="116" cy="609" rx="8" ry="9" fill="#e8d070" stroke="#4a1838" stroke-width="2"/>
<ellipse cx="116" cy="609" rx="2.5" ry="4" fill="#c89050"/>
<path d="M95 587l6 6" stroke="#70a050" stroke-width="4"/>
<!-- strawberries -->
<path d="M86 637l5 4 4-7 4 5 5-6 3 6 6-4" stroke="#48a030" stroke-width="3.5" fill="none"/>
<path d="M108 640l10 3 5 6" stroke="#58b040" stroke-width="5" fill="none"/>
<path d="M89 640c8-3 17 0 19 7s-2 13-9 14-12-3-13-9 0-10 3-12z" fill="url(#fS)"/>
<path d="M78 652c6-3 15-1 17 5s-2 10-8 10-11-3-11-8 0-5 2-7z" fill="url(#fS)"/>
<path d="M81 655c4-1 9 1 10 4s-2 5-6 5-6-2-6-4 0-4 2-5z" fill="#ffb0b0" opacity=".8"/>
<path d="M100 650c8-2 16 2 17 9s-5 11-11 11-11-4-11-10 2-9 5-10z" fill="url(#fS)"/>
<path d="M74 657l5-4M77 650l4 3" stroke="#50a030" stroke-width="2.5"/>
</svg>
<!-- gray area -->
<div class="a" style="left:14px;top:672px;width:110px;height:32px;background:#ababab"></div>
<!-- h scrollbar -->
<div class="a" style="left:13px;top:704px;width:111px;height:17px;background:#eaeaea"></div>
<svg class="a" style="left:13px;top:704px" width="111" height="17" viewBox="13 704 111 17"><path d="M20 712.5l3.5-3.5v7z" fill="#333"/></svg>
<div class="a" style="left:32px;top:705px;width:92px;height:15px;border:1px solid #a8a8a8;border-radius:2px;background:linear-gradient(#f4f4f4,#e4e4e4 50%,#d4d4d4)"></div>
<!-- nav buttons -->
<div class="a" style="left:14px;top:721px;width:110px;height:65px;background:#fff"></div>
<div class="a" style="left:16px;top:723px;width:25px;height:25px;border:1px solid #555;background:#fff"></div>
<div class="a" style="left:43px;top:723px;width:25px;height:25px;border:1px solid #555;background:#fff"></div>
<div class="a" style="left:70px;top:723px;width:25px;height:25px;border:1px solid #555;background:#fff"></div>
<div class="a" style="left:97px;top:723px;width:25px;height:25px;border:1px solid #555;background:#fff"></div>
<svg class="a" style="left:16px;top:723px" width="108" height="25" viewBox="16 723 108 25">
<rect x="23" y="729" width="3" height="13" rx="1.2" fill="#8a8a8a"/><path d="M35 729v13l-7-6.5z" fill="#8a8a8a"/>
<path d="M58 729v13l-7-6.5z" fill="#8a8a8a"/>
<path d="M82.5 729l5 5h-10zM82.5 742l5-5h-10z" fill="#1a78e0"/>
<path d="M105 729v13l6-6.5z" fill="#8a8a8a"/>
</svg>
<!-- memo -->
<div class="a" style="left:16px;top:750px;width:108px;height:34px;border:1px solid #707070;background:#fff;border-right:none"></div>
<div class="a" style="left:13px;top:786px;width:111px;height:1px;background:#707070"></div>
<div class="a" style="left:13px;top:367px;width:1px;height:420px;background:#707070"></div>

<!-- preview window -->
<div class="a" style="left:123px;top:127px;width:901px;height:673px;background:linear-gradient(#9ab4d6 0,#bad1eb 30px,#bcd3ec 100%);border:1px solid #111;border-radius:6px 6px 0 0;border-bottom-width:2px"></div>
<div class="a" style="left:124px;top:133px;width:1px;height:664px;background:#fff"></div>
<div class="t" style="left:135px;top:140px">Предварительный просмотр</div>
<div class="a" style="left:131px;top:157px;width:884px;height:25px;background:linear-gradient(#fdfdfd,#f4f4f4 50%,#ececec)"></div>
<div class="a" style="left:131px;top:182px;width:867px;height:609px;background:#ababab"></div>
<div class="a" style="left:998px;top:182px;width:17px;height:609px;background:#efefef"></div>
<!-- page -->
<div class="a" style="left:171px;top:186px;width:788px;height:605px;background:#fff;border:1px solid #000;border-right-width:2px;border-bottom:none"></div>
<svg class="a" style="left:0;top:120px" width="1024" height="70" viewBox="0 120 1024 70">
<g transform="translate(916 137)">
<rect x=".5" y=".5" width="29" height="16" rx="3" fill="url(#cbB)" stroke="#5d6e86"/>
<rect x="1.5" y="1.5" width="27" height="14" rx="2" fill="none" stroke="#fff" stroke-opacity=".55"/>
<rect x="10.5" y="8.5" width="10" height="4" rx="1.5" fill="#fff" stroke="#4a5060"/>
<rect x="33.5" y=".5" width="29" height="16" rx="3" fill="url(#cbB)" stroke="#5d6e86"/>
<rect x="34.5" y="1.5" width="27" height="14" rx="2" fill="none" stroke="#fff" stroke-opacity=".55"/>
<rect x="43.5" y="4.5" width="10" height="8" rx="1" fill="#fff" stroke="#4a5060"/>
<rect x="46" y="7" width="5" height="2" fill="#7a9ac0"/>
<rect x="66.5" y=".5" width="30" height="16" rx="3" fill="url(#cbR)" stroke="#5a1e1e"/>
<rect x="67.5" y="1.5" width="28" height="14" rx="2" fill="none" stroke="#fff" stroke-opacity=".4"/>
<path d="M78.5 6l7 6M85.5 6l-7 6" stroke="#404050" stroke-width="4.4" stroke-linecap="round"/>
<path d="M78.5 6l7 6M85.5 6l-7 6" stroke="#fff" stroke-width="2.6" stroke-linecap="round"/>
</g>
<!-- printer -->
<defs><linearGradient id="prB" x1="0" y1="0" x2="0" y2="1"><stop offset="0" stop-color="#c0c8d4"/><stop offset="1" stop-color="#505a6a"/></linearGradient>
<linearGradient id="glG" x1="0" y1="0" x2="1" y2="1"><stop offset="0" stop-color="#fff"/><stop offset="1" stop-color="#b8d4f4"/></linearGradient></defs>
<polygon points="138.8,162.1 146.8,162.1 145.4,167.3 136.3,167.3" fill="#f4f6fa" stroke="#8a96a8" stroke-width=".9"/>
<path d="M139.5 164h5M139 165.8h5" stroke="#9aa4b4" stroke-width=".6"/>
<rect x="133.5" y="166.5" width="14" height="9" rx="1.5" fill="url(#prB)"/>
<rect x="134.8" y="170" width="9" height="3.6" fill="#f4f6fa"/>
<rect x="142" y="170.8" width="3" height="3" fill="#10d010"/>
<rect x="134" y="174.5" width="13" height="1.3" fill="#3a4656"/>
<!-- combo arrow -->
<path d="M368 168.5h6l-3 3z" fill="#000"/>
<!-- structure doc icon -->
<path d="M382.7 161.5h9.5l2.6 2.6v11.2h-12.1z" fill="#fff" stroke="#9aaac8" stroke-width="1"/>
<path d="M394.8 164.5v10.8h-12.1" stroke="#233850" stroke-width="1.2" fill="none"/>
<rect x="384.8" y="163.5" width="8" height="10.5" fill="#f4f8ff" stroke="#e08a10" stroke-width="1"/>
<!-- sep -->
<rect x="465" y="162" width="1" height="15" fill="#b8b8b8"/>
<!-- magnifier -->
<path d="M479.5 170.5l4.5 4.5" stroke="#b08810" stroke-width="3.4"/>
<path d="M479.5 170.5l4.5 4.5" stroke="#f0c840" stroke-width="2"/>
<circle cx="476" cy="167" r="5.2" fill="url(#glG)" stroke="#8a9098" stroke-width="1.3"/>
<path d="M491.8 168h5.2l-2.6 2.8z" fill="#000"/>
<!-- first -->
<rect x="504.5" y="162" width="2.5" height="13" fill="#1a70d0"/>
<path d="M518 162v13l-9-6.5z" fill="#2a88e8"/>
<!-- prev -->
<path d="M536.5 162v13l-8-6.5z" fill="#2a88e8"/>
<!-- next -->
<path d="M614 162v13l8-6.5z" fill="#2a88e8"/>
<!-- last -->
<path d="M634 162v13l8-6.5z" fill="#2a88e8"/><rect x="644.5" y="162" width="2.5" height="13" fill="#1a70d0"/>
<!-- close X -->
<path d="M658.5 163.5l10 10M668.5 163.5l-10 10" stroke="#e02020" stroke-width="2.2"/>
</svg>
<div class="a" style="left:198px;top:158px;width:168px;height:22px;background:#fff"></div>
<div class="t" style="left:152px;top:163px">Печать</div>
<div class="t" style="left:202px;top:163px;letter-spacing:-.45px">Samsung M262x 282x Series</div>
<div class="t" style="left:400px;top:163px">Структура</div>
<div class="a" style="left:547px;top:158px;width:32px;height:22px;background:#fff"></div>
<div class="t" style="left:559px;top:163px">1</div>
<div class="t" style="left:583px;top:163px">of 1</div>
<div class="t" style="left:673px;top:163px"><u>З</u>акрыть</div>
<!-- scrollbar -->
<svg class="a" style="left:998px;top:182px" width="17" height="609" viewBox="998 182 17 609">
<path d="M1003.5 193.5l3.5-3.5 3.5 3.5z" fill="#333"/>
<path d="M1003.5 780l3.5 3.5 3.5-3.5z" fill="#333"/>
<rect x="999.5" y="200.5" width="14" height="309" rx="2" fill="url(#sbT)" stroke="#9a9a9a"/>
<defs><linearGradient id="sbT" x1="0" y1="0" x2="1" y2="0"><stop offset="0" stop-color="#f4f4f4"/><stop offset=".5" stop-color="#e8e8e8"/><stop offset=".55" stop-color="#d8d8de"/><stop offset="1" stop-color="#c8c8d0"/></linearGradient></defs>
<path d="M1004 352.5h6M1004 354.5h6M1004 356.5h6" stroke="#444" stroke-width="1"/>
</svg>

<!-- invoice content -->
<div class="t b" style="left:216px;top:238px;font-size:20px;letter-spacing:.8px">Инвойс</div><div class="t b" style="left:303px;top:238px;font-size:20px;letter-spacing:.8px">№</div><div class="t b" style="left:332px;top:238px;font-size:20px;letter-spacing:.8px">FV1/16</div>
<div class="t b" style="left:215px;top:270px;font-size:16px;letter-spacing:.45px">Оригинал</div>
<div class="t i" style="right:224px;top:276px;font-size:13px">Дата выставления документа:</div>
<div class="t i" style="right:228px;top:291px;font-size:13px">Дата продажи:</div>
<div class="t i" style="right:224px;top:307px;font-size:13px">Место выставления:</div>
<div class="t b" style="left:806px;top:276px;font-size:13px">2016-04-13</div>
<div class="t b" style="left:806px;top:291px;font-size:13px">2016-04-13</div>
<div class="t b" style="left:806px;top:307px;font-size:13px">Wrocław</div>
<div class="a" style="left:213px;top:352px;width:701px;height:1px;background:#000"></div>
<div class="t i" style="left:215px;top:377px;font-size:13px">Продавец:</div>
<div class="t i" style="left:555px;top:377px;font-size:13px">Отправитель:</div>
<div class="t b" style="left:216px;top:404px;font-size:16px">LONGINT</div>
<div class="t b" style="left:555px;top:404px;font-size:16px">Zieleniak</div>
<div class="t" style="left:216px;top:432px;font-size:16px">ul. Wykładowa 17</div>
<div class="t" style="left:216px;top:456px;font-size:16px">51-520&nbsp; Wrocław</div>
<div class="t" style="left:216px;top:480px;font-size:16px">УНП 564-148-35-49</div>
<div class="t" style="left:555px;top:432px;font-size:16px">Owocowa 1</div>
<div class="t" style="left:555px;top:456px;font-size:16px">50-508&nbsp;&nbsp; Wrocław</div>
<div class="t" style="left:555px;top:480px;font-size:16px">УНП 123-456-7890</div>

<div class="a" style="left:213px;top:542px;width:696px;height:31px;background:#d3d3d3"></div>
<div class="a" style="left:213px;top:542px;width:1px;height:129px;background:#000"></div>
<div class="a" style="left:253px;top:542px;width:1px;height:129px;background:#000"></div>
<div class="a" style="left:456px;top:542px;width:1px;height:129px;background:#000"></div>
<div class="a" style="left:536px;top:542px;width:1px;height:129px;background:#000"></div>
<div class="a" style="left:617px;top:542px;width:1px;height:129px;background:#000"></div>
<div class="a" style="left:682px;top:542px;width:1px;height:129px;background:#000"></div>
<div class="a" style="left:747px;top:542px;width:1px;height:129px;background:#000"></div>
<div class="a" style="left:828px;top:542px;width:1px;height:129px;background:#000"></div>
<div class="a" style="left:908px;top:542px;width:1px;height:129px;background:#000"></div>
<div class="a" style="left:213px;top:542px;width:696px;height:1px;background:#000"></div>
<div class="a" style="left:213px;top:573px;width:696px;height:1px;background:#000"></div>
<div class="a" style="left:213px;top:589px;width:696px;height:1px;background:#000"></div>
<div class="a" style="left:213px;top:605px;width:696px;height:1px;background:#000"></div>
<div class="a" style="left:213px;top:621px;width:696px;height:1px;background:#000"></div>
<div class="a" style="left:213px;top:638px;width:696px;height:1px;background:#000"></div>
<div class="a" style="left:213px;top:654px;width:696px;height:1px;background:#000"></div>
<div class="a" style="left:213px;top:670px;width:696px;height:1px;background:#000"></div>
<div class="hc" style="left:214px;width:39px">№</div>
<div class="hc" style="left:254px;width:202px">Имя товара</div>
<div class="hc" style="left:457px;width:79px">Цена нетто</div>
<div class="hc" style="left:537px;width:80px">Цена<br>брутто</div>
<div class="hc" style="left:618px;width:64px">Количест<br>во</div>
<div class="hc" style="left:683px;width:64px">Ставка<br>НДС</div>
<div class="hc" style="left:748px;width:80px">Стоимость<br>нетто</div>
<div class="hc" style="left:829px;width:79px">Стоимость<br>брутто</div>
<div class="tc" style="left:214px;top:574px;width:39px;height:15px;text-align:center;">1</div>
<div class="tc" style="left:254px;top:574px;width:202px;height:15px;text-align:left;padding-left:1px;">Jabłka</div>
<div class="tc" style="left:457px;top:574px;width:79px;height:15px;text-align:right;">3,00</div>
<div class="tc" style="left:537px;top:574px;width:80px;height:15px;text-align:right;">3,69</div>
<div class="tc" style="left:618px;top:574px;width:64px;height:15px;text-align:right;">1,00</div>
<div class="tc" style="left:683px;top:574px;width:64px;height:15px;text-align:center;">23%</div>
<div class="tc" style="left:748px;top:574px;width:80px;height:15px;text-align:right;">3,00</div>
<div class="tc" style="left:829px;top:574px;width:79px;height:15px;text-align:right;">3,69</div>
<div class="tc" style="left:214px;top:590px;width:39px;height:15px;text-align:center;">2</div>
<div class="tc" style="left:254px;top:590px;width:202px;height:15px;text-align:left;padding-left:1px;">Pomarańcze</div>
<div class="tc" style="left:457px;top:590px;width:79px;height:15px;text-align:right;">4,00</div>
<div class="tc" style="left:537px;top:590px;width:80px;height:15px;text-align:right;">4,92</div>
<div class="tc" style="left:618px;top:590px;width:64px;height:15px;text-align:right;">2,00</div>
<div class="tc" style="left:683px;top:590px;width:64px;height:15px;text-align:center;">23%</div>
<div class="tc" style="left:748px;top:590px;width:80px;height:15px;text-align:right;">8,00</div>
<div class="tc" style="left:829px;top:590px;width:79px;height:15px;text-align:right;">9,84</div>
<div class="tc" style="left:214px;top:606px;width:39px;height:15px;text-align:center;">3</div>
<div class="tc" style="left:254px;top:606px;width:202px;height:15px;text-align:left;padding-left:1px;">Gruszki</div>
<div class="tc" style="left:457px;top:606px;width:79px;height:15px;text-align:right;">4,00</div>
<div class="tc" style="left:537px;top:606px;width:80px;height:15px;text-align:right;">4,92</div>
<div class="tc" style="left:618px;top:606px;width:64px;height:15px;text-align:right;">1,00</div>
<div class="tc" style="left:683px;top:606px;width:64px;height:15px;text-align:center;">23%</div>
<div class="tc" style="left:748px;top:606px;width:80px;height:15px;text-align:right;">4,00</div>
<div class="tc" style="left:829px;top:606px;width:79px;height:15px;text-align:right;">4,92</div>
<div class="tc" style="left:214px;top:622px;width:39px;height:16px;text-align:center;">4</div>
<div class="tc" style="left:254px;top:622px;width:202px;height:16px;text-align:left;padding-left:1px;">Truskawki</div>
<div class="tc" style="left:457px;top:622px;width:79px;height:16px;text-align:right;">7,00</div>
<div class="tc" style="left:537px;top:622px;width:80px;height:16px;text-align:right;">8,61</div>
<div class="tc" style="left:618px;top:622px;width:64px;height:16px;text-align:right;">1,00</div>
<div class="tc" style="left:683px;top:622px;width:64px;height:16px;text-align:center;">23%</div>
<div class="tc" style="left:748px;top:622px;width:80px;height:16px;text-align:right;">7,00</div>
<div class="tc" style="left:829px;top:622px;width:79px;height:16px;text-align:right;">8,61</div>
<div class="tc" style="left:214px;top:639px;width:39px;height:15px;text-align:center;">5</div>
<div class="tc" style="left:254px;top:639px;width:202px;height:15px;text-align:left;padding-left:1px;">Sliwki</div>
<div class="tc" style="left:457px;top:639px;width:79px;height:15px;text-align:right;">6,00</div>
<div class="tc" style="left:537px;top:639px;width:80px;height:15px;text-align:right;">7,38</div>
<div class="tc" style="left:618px;top:639px;width:64px;height:15px;text-align:right;">1,00</div>
<div class="tc" style="left:683px;top:639px;width:64px;height:15px;text-align:center;">23%</div>
<div class="tc" style="left:748px;top:639px;width:80px;height:15px;text-align:right;">6,00</div>
<div class="tc" style="left:829px;top:639px;width:79px;height:15px;text-align:right;">7,38</div>
<div class="tc" style="left:214px;top:655px;width:39px;height:15px;text-align:center;">6</div>
<div class="tc" style="left:254px;top:655px;width:202px;height:15px;text-align:left;padding-left:1px;">Cytryny</div>
<div class="tc" style="left:457px;top:655px;width:79px;height:15px;text-align:right;">6,00</div>
<div class="tc" style="left:537px;top:655px;width:80px;height:15px;text-align:right;">7,38</div>
<div class="tc" style="left:618px;top:655px;width:64px;height:15px;text-align:right;">1,00</div>
<div class="tc" style="left:683px;top:655px;width:64px;height:15px;text-align:center;">23%</div>
<div class="tc" style="left:748px;top:655px;width:80px;height:15px;text-align:right;">6,00</div>
<div class="tc" style="left:829px;top:655px;width:79px;height:15px;text-align:right;">7,38</div>
<div class="a" style="left:574px;top:693px;width:340px;height:31px;background:#d3d3d3"></div>
<div class="a" style="left:574px;top:693px;width:1px;height:48px;background:#000"></div>
<div class="a" style="left:659px;top:693px;width:1px;height:48px;background:#000"></div>
<div class="a" style="left:744px;top:693px;width:1px;height:48px;background:#000"></div>
<div class="a" style="left:829px;top:693px;width:1px;height:48px;background:#000"></div>
<div class="a" style="left:913px;top:693px;width:1px;height:48px;background:#000"></div>
<div class="a" style="left:574px;top:693px;width:340px;height:1px;background:#000"></div>
<div class="a" style="left:574px;top:724px;width:340px;height:1px;background:#000"></div>
<div class="a" style="left:574px;top:740px;width:340px;height:1px;background:#000"></div>
<div class="hc2" style="left:575px;width:84px">Ставка НДС</div>
<div class="tc" style="left:575px;top:725px;width:84px;height:15px;text-align:center">23%</div>
<div class="hc2" style="left:660px;width:84px">Стоимость<br>нетто</div>
<div class="tc" style="left:660px;top:725px;width:84px;height:15px;text-align:right">34,00</div>
<div class="hc2" style="left:745px;width:84px">Сумма НДС</div>
<div class="tc" style="left:745px;top:725px;width:84px;height:15px;text-align:right">7,82</div>
<div class="hc2" style="left:830px;width:83px">Стоимость<br>брутто</div>
<div class="tc" style="left:830px;top:725px;width:83px;height:15px;text-align:right">41,82</div>
<div class="t b" style="left:577px;top:758px;font-size:13px">Итого</div>
<div class="t b" style="right:282px;top:758px;font-size:13px">34,00</div>
<div class="t b" style="right:197px;top:758px;font-size:13px">7,82</div>
<div class="t b" style="right:112px;top:758px;font-size:13px">41,82</div>
<div class="a" style="left:575px;top:772px;width:339px;height:2px;background:#000"></div>

<div class="a" style="left:1px;top:797px;width:1022px;height:1px;background:#58c4e8"></div>
<div class="a" style="left:1022px;top:130px;width:1px;height:667px;background:#58c4e8"></div>
</body></html>
